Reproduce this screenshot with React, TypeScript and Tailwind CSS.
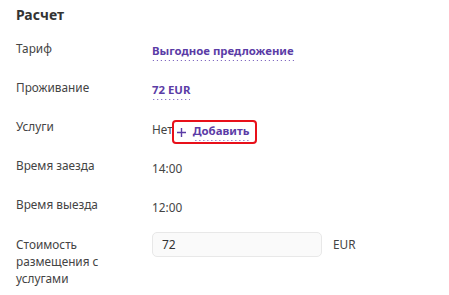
import React from "react";

type Row = {
  label: string;
  value: React.ReactNode;
};

const linkCls =
  "font-bold text-[11.4px] text-[#5b3ca6] leading-[16px] pb-[2px] bg-[linear-gradient(to_right,#6a4fb5_1px,transparent_1px)] bg-[length:4px_1px] bg-repeat-x bg-bottom";

const Raschet: React.FC = () => {
  const rows: Row[] = [
    { label: "Тариф", value: <span className={linkCls}>Выгодное предложение</span> },
    { label: "Проживание", value: <span className={linkCls}>72 EUR</span> },
    {
      label: "Услуги",
      value: (
        <div className="flex items-start">
          <span className="text-[#444] leading-[16px]">Нет</span>
          <button className="flex items-center h-[24px] w-[85px] -mt-[1px] -ml-[1px] border-2 border-[#e8101a] rounded-[4px] pl-[3px] bg-white">
            <svg width="9" height="9" viewBox="0 0 9 9" className="mr-[7px] mt-[1px]">
              <path d="M4.5 0v9M0 4.5h9" stroke="#5b3ca6" strokeWidth="1.4" />
            </svg>
            <span className={linkCls}>Добавить</span>
          </button>
        </div>
      ),
    },
    { label: "Время заезда", value: <span className="text-[#444]">14:00</span> },
    { label: "Время выезда", value: <span className="text-[#444]">12:00</span> },
  ];

  return (
    <div className="w-[449px] h-[295px] bg-white px-4 pt-[4px] text-[11.8px] text-[#444] font-['Noto_Sans',sans-serif]">
      <h2 className="text-[14px] font-bold text-[#333] leading-[22px]">Расчет</h2>
      <div className="mt-[14px] flex flex-col">
        {rows.map((r) => (
          <div key={r.label} className="grid grid-cols-[136px_1fr] h-[39px] items-start">
            <span className="leading-[17px]">{r.label}</span>
            <div className="pt-[3px] flex">{r.value}</div>
          </div>
        ))}
        <div className="grid grid-cols-[136px_1fr] items-start">
          <span className="leading-[17px] pt-[1px] w-[110px]">Стоимость размещения с услугами</span>
          <div className="flex items-center -mt-[3px]">
            <input
              readOnly
              value="72"
              className="w-[170px] h-[25px] rounded-[5px] border border-[#e8e8e8] bg-[#fafafa] px-[9px] text-[12px] text-[#333] outline-none"
            />
            <span className="ml-[11px] text-[#444]">EUR</span>
          </div>
        </div>
      </div>
    </div>
  );
};

export default function App() {
  return <Raschet />;
}
